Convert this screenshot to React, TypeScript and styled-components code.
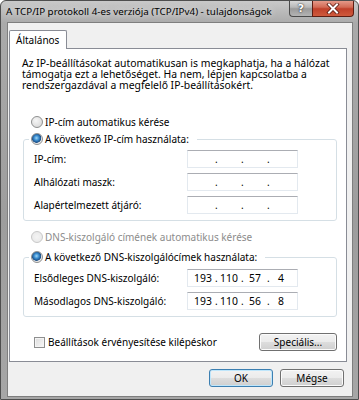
import React from "react";
import styled, { createGlobalStyle, css } from "styled-components";

const GlobalStyle = createGlobalStyle`
	html, body {
		margin: 0;
		padding: 0;
		background: #ffffff;
	}
	body {
		font-family: "Noto Sans", "DejaVu Sans", sans-serif;
		font-size: 10px;
		color: #000;
	}
`;

const Window = styled.div`
	width: 359px;
	height: 400px;
	box-sizing: border-box;
	display: flex;
	flex-direction: column;
	background: linear-gradient(#c9c9c9 0, #aaaaaa 22px, #9d9d9d 55%, #a6a6a6 100%);
	border: 1px solid #4e4e4e;
	border-radius: 6px 6px 0 0;
	overflow: hidden;
`;

const TitleBar = styled.div`
	height: 21px;
	display: flex;
	align-items: flex-start;
	justify-content: space-between;
	flex-shrink: 0;
`;

const Title = styled.div`
	padding-left: 5px;
	line-height: 22px;
	font-size: 9.8px;
	color: #000;
	text-shadow: 0 0 6px rgba(255, 255, 255, 0.9);
	white-space: nowrap;
`;

const CaptionButtons = styled.div`
	display: flex;
	margin-right: 4px;
	margin-top: -1px;
`;

const CaptionButton = styled.div<{ close?: boolean }>`
	height: 17px;
	box-sizing: border-box;
	display: flex;
	align-items: center;
	justify-content: center;
	border: 1px solid #4a4a4a;
	border-top: none;
	${({ close }) =>
		close
			? css`
					width: 42px;
					border-radius: 0 0 4px 0;
					background: linear-gradient(#e8a191 0%, #d26a55 45%, #c0402a 55%, #cf5a3c 100%);
					border-color: #5e1d12;
			  `
			: css`
					width: 23px;
					border-radius: 0 0 0 4px;
					border-right: none;
					background: linear-gradient(#dedede 0%, #b8b8b8 45%, #9a9a9a 55%, #b4b4b4 100%);
			  `}
`;

const HelpGlyph = styled.span`
	color: #fff;
	font-family: "DejaVu Sans", sans-serif;
	font-weight: bold;
	font-size: 11px;
	line-height: 1;
	text-shadow: 0 0 1px #333, 0 0 2px #333;
`;

const Client = styled.div`
	flex: 1;
	margin: 0 5px 2px 6px;
	border: 1px solid #7e7e7e;
	background: #f0f0f0;
	display: flex;
	flex-direction: column;
	padding: 7px 5px 0 1px;
`;

const TabStrip = styled.div`
	display: flex;
	flex-shrink: 0;
`;

const Tab = styled.div`
	position: relative;
	z-index: 1;
	height: 18px;
	margin-bottom: -1px;
	padding: 0 7px 0 6px;
	line-height: 18px;
	background: #fff;
	border: 1px solid #898c95;
	border-bottom: none;
	border-radius: 2px 2px 0 0;
`;

const Panel = styled.div`
	flex: 1;
	background: #fff;
	border: 1px solid #898c95;
	padding: 9px 9px 0 12px;
	display: flex;
	flex-direction: column;
`;

const Intro = styled.p`
	margin: 0 0 24px;
	line-height: 11px;
	font-size: 10.4px;
`;

const OptionRow = styled.label<{ disabled?: boolean; gapAfter: number }>`
	display: flex;
	align-items: center;
	gap: 2px;
	margin: 0 0 ${({ gapAfter }) => gapAfter}px 9px;
	height: 14px;
	white-space: nowrap;
	color: ${({ disabled }) => (disabled ? "#8c8c8c" : "#000")};
`;

const Radio = styled.span<{ checked?: boolean; disabled?: boolean }>`
	width: 10px;
	height: 10px;
	border-radius: 50%;
	border: 1px solid ${({ disabled }) => (disabled ? "#c8c8c8" : "#8e8f8f")};
	background: ${({ checked, disabled }) =>
		checked
			? "radial-gradient(circle at 45% 40%, #9fd7f7 0, #3a8ccf 30%, #1c4f86 55%, #e6e6e6 62%, #f8f8f8 100%)"
			: disabled
			? "radial-gradient(circle, #f4f4f4, #e6e6e6)"
			: "radial-gradient(circle at 40% 35%, #f6f6f6, #d3d3d3)"};
	flex-shrink: 0;
`;

const Group = styled.fieldset<{ gapAfter: number; padTop: number }>`
	margin: 0 0 ${({ gapAfter }) => gapAfter}px 1px;
	padding: ${({ padTop }) => padTop}px 38px 6px 10px;
	border: 1px solid #d5dfe5;
	border-radius: 3px;
	display: flex;
	flex-direction: column;
	gap: 5px;
	min-width: 0;
`;

const Legend = styled.legend`
	margin-left: -5px;
	padding: 0 8px 0 2px;
	height: 14px;
	display: flex;
	align-items: center;
	gap: 2px;
	white-space: nowrap;
`;

const FieldRow = styled.div`
	display: flex;
	align-items: center;
	justify-content: space-between;
	height: 18px;
	white-space: nowrap;
`;

const IpBox = styled.div`
	width: 111px;
	height: 18px;
	box-sizing: border-box;
	border: 1px solid #e3e9ef;
	border-top-color: #abadb3;
	background: #fff;
	display: flex;
	align-items: center;
	padding-left: 3px;
	flex-shrink: 0;
`;

const Octet = styled.span`
	width: 24px;
	text-align: center;
	font-size: 10.4px;
`;

const Dot = styled.span`
	width: 2px;
	text-align: center;
`;

const BottomRow = styled.div`
	display: flex;
	align-items: center;
	justify-content: space-between;
`;

const CheckLabel = styled.label`
	display: flex;
	align-items: center;
	gap: 3px;
	margin-left: 12px;
	white-space: nowrap;
`;

const CheckBox = styled.span`
	width: 9px;
	height: 9px;
	border: 1px solid #8e8f8f;
	background: linear-gradient(135deg, #dcdcdc, #f8f8f8);
	box-shadow: inset 0 0 0 1px #f4f4f4;
`;

const Button = styled.div<{ isDefault?: boolean; width: number }>`
	width: ${({ width }) => width}px;
	height: 18px;
	box-sizing: border-box;
	display: flex;
	align-items: center;
	justify-content: center;
	border: 1px solid ${({ isDefault }) => (isDefault ? "#3c7fb1" : "#707070")};
	border-radius: 3px;
	background: linear-gradient(#f2f2f2 0%, #ebebeb 50%, #dddddd 51%, #cfcfcf 100%);
	box-shadow: inset 0 0 0 1px ${({ isDefault }) => (isDefault ? "#bfe6fb" : "#fbfbfb")};
`;

const DialogButtons = styled.div`
	display: flex;
	justify-content: flex-end;
	gap: 7px;
	padding: 7px 3px 9px 0;
	flex-shrink: 0;
`;

const IpField = ({ value }: { value?: string[] }) => {
	const parts = value || ["", "", "", ""];
	return (
		<IpBox>
			{parts.map((p, i) => (
				<React.Fragment key={i}>
					{i > 0 && <Dot>.</Dot>}
					<Octet>{p}</Octet>
				</React.Fragment>
			))}
		</IpBox>
	);
};

const CloseGlyph = () => (
	<svg width="14" height="11" viewBox="0 0 14 11">
		<path d="M3 1.5 L11 9.5 M11 1.5 L3 9.5" stroke="#5a1a10" strokeWidth="3.6" strokeLinecap="square" />
		<path d="M3 1.5 L11 9.5 M11 1.5 L3 9.5" stroke="#ffffff" strokeWidth="2" strokeLinecap="square" />
	</svg>
);

export default function App() {
	return (
		<>
			<GlobalStyle />
			<Window>
				<TitleBar>
					<Title>A TCP/IP protokoll 4-es verziója (TCP/IPv4) - tulajdonságok</Title>
					<CaptionButtons>
						<CaptionButton>
							<HelpGlyph>?</HelpGlyph>
						</CaptionButton>
						<CaptionButton close>
							<CloseGlyph />
						</CaptionButton>
					</CaptionButtons>
				</TitleBar>
				<Client>
					<TabStrip>
						<Tab>Általános</Tab>
					</TabStrip>
					<Panel>
						<Intro>
							Az IP-beállításokat automatikusan is megkaphatja, ha a hálózat támogatja ezt a lehetőséget. Ha nem,
							lépjen kapcsolatba a rendszergazdával a megfelelő IP-beállításokért.
						</Intro>
						<OptionRow gapAfter={3}>
							<Radio />
							IP-cím automatikus kérése
						</OptionRow>
						<Group gapAfter={9} padTop={4}>
							<Legend>
								<Radio checked />
								A következő IP-cím használata:
							</Legend>
							<FieldRow>
								<span>IP-cím:</span>
								<IpField />
							</FieldRow>
							<FieldRow>
								<span>Alhálózati maszk:</span>
								<IpField />
							</FieldRow>
							<FieldRow>
								<span>Alapértelmezett átjáró:</span>
								<IpField />
							</FieldRow>
						</Group>
						<OptionRow disabled gapAfter={6}>
							<Radio disabled />
							DNS-kiszolgáló címének automatikus kérése
						</OptionRow>
						<Group gapAfter={16} padTop={5}>
							<Legend>
								<Radio checked />
								A következő DNS-kiszolgálócímek használata:
							</Legend>
							<FieldRow>
								<span>Elsődleges DNS-kiszolgáló:</span>
								<IpField value={["193", "110", "57", "4"]} />
							</FieldRow>
							<FieldRow>
								<span>Másodlagos DNS-kiszolgáló:</span>
								<IpField value={["193", "110", "56", "8"]} />
							</FieldRow>
						</Group>
						<BottomRow>
							<CheckLabel>
								<CheckBox />
								Beállítások érvényesítése kilépéskor
							</CheckLabel>
							<Button width={78}>Speciális...</Button>
						</BottomRow>
					</Panel>
					<DialogButtons>
						<Button isDefault width={64}>
							OK
						</Button>
						<Button width={64}>Mégse</Button>
					</DialogButtons>
				</Client>
			</Window>
		</>
	);
}
